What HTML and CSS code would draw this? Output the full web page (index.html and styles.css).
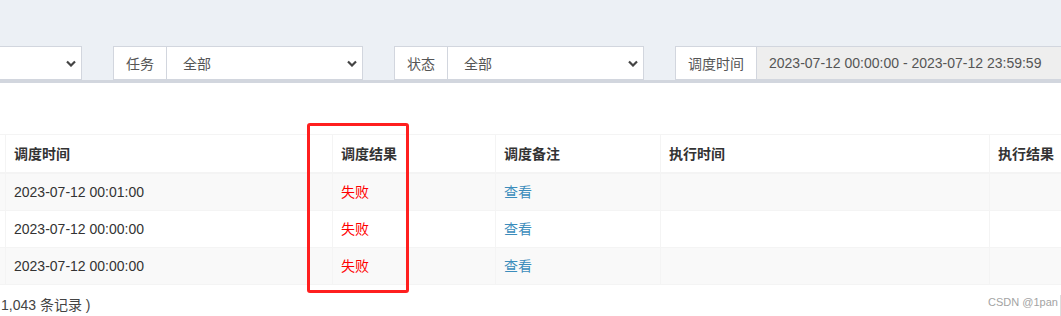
FILE: index.html
```html
<!DOCTYPE html>
<html lang="zh-CN">
<head>
    <meta charset="UTF-8">
    <title>调度日志</title>
    <link rel="stylesheet" href="styles.css">
</head>
<body>
<div class="page">

    <!-- Filter bar -->
    <div class="filters">
        <div class="input-group">
            <div class="select">
                <span></span>
                <svg class="chevron" width="10" height="7" viewBox="0 0 10 7"><polyline points="1,1.5 5,5.5 9,1.5" fill="none" stroke="#444" stroke-width="2.2"/></svg>
            </div>
        </div>
        <div class="input-group">
            <span class="addon">任务</span>
            <div class="select">
                <span>全部</span>
                <svg class="chevron" width="10" height="7" viewBox="0 0 10 7"><polyline points="1,1.5 5,5.5 9,1.5" fill="none" stroke="#444" stroke-width="2.2"/></svg>
            </div>
        </div>
        <div class="input-group">
            <span class="addon">状态</span>
            <div class="select">
                <span>全部</span>
                <svg class="chevron" width="10" height="7" viewBox="0 0 10 7"><polyline points="1,1.5 5,5.5 9,1.5" fill="none" stroke="#444" stroke-width="2.2"/></svg>
            </div>
        </div>
        <div class="input-group wide">
            <span class="addon">调度时间</span>
            <div class="date-input">2023-07-12 00:00:00 - 2023-07-12 23:59:59</div>
        </div>
    </div>

    <!-- Log table -->
    <div class="box">
        <table class="log-table">
            <thead>
                <tr>
                    <th class="col-cut"></th>
                    <th class="col-time">调度时间</th>
                    <th class="col-result">调度结果</th>
                    <th class="col-note">调度备注</th>
                    <th class="col-exec">执行时间</th>
                    <th class="col-exec-result">执行结果</th>
                </tr>
            </thead>
            <tbody>
                <tr>
                    <td></td>
                    <td>2023-07-12 00:01:00</td>
                    <td class="fail">失败</td>
                    <td><a href="#">查看</a></td>
                    <td></td>
                    <td></td>
                </tr>
                <tr>
                    <td></td>
                    <td>2023-07-12 00:00:00</td>
                    <td class="fail">失败</td>
                    <td><a href="#">查看</a></td>
                    <td></td>
                    <td></td>
                </tr>
                <tr>
                    <td></td>
                    <td>2023-07-12 00:00:00</td>
                    <td class="fail">失败</td>
                    <td><a href="#">查看</a></td>
                    <td></td>
                    <td></td>
                </tr>
            </tbody>
        </table>
        <div class="table-info">1,043 条记录 )</div>

        <!-- red annotation box -->
        <div class="highlight"></div>
        <div class="watermark">CSDN @1pan</div>
        <div class="edge-line"></div>
    </div>

</div>
</body>
</html>
```

FILE: styles.css
```css
/* Global */
body {
    margin: 0;
    background-color: #ecf0f5;
    font-family: 'Liberation Sans', 'Noto Sans CJK SC', sans-serif;
    font-size: 14px;
    color: #333;
}

.page {
    width: 1061px;
    height: 316px;
    overflow: hidden;
}

/* Filter bar */
.filters {
    display: flex;
    gap: 31px;
    padding-top: 46px;
    margin-left: -168px;
    white-space: nowrap;
}

.input-group {
    display: flex;
    flex-shrink: 0;
    width: 250px;
    height: 34px;
}

.input-group.wide {
    width: 420px;
}

.addon {
    display: flex;
    align-items: center;
    padding: 0 12px;
    background-color: #fff;
    border: 1px solid #d2d6de;
    color: #555;
}

.select {
    flex: 1;
    display: flex;
    align-items: center;
    justify-content: space-between;
    padding: 0 5px 0 16px;
    background-color: #fff;
    border: 1px solid #d2d6de;
    border-left: none;
    color: #555;
}

.input-group:first-child .select {
    border-left: 1px solid #d2d6de;
}

.chevron {
    display: block;
}

.date-input {
    flex: 1;
    display: flex;
    align-items: center;
    padding: 0 12px;
    background-color: #eee;
    border: 1px solid #d2d6de;
    border-left: none;
    color: #555;
}

/* Box with table */
.box {
    position: relative;
    background-color: #fff;
    border-top: 3px solid #d2d6de;
    height: 240px;
    padding-top: 51px;
    box-sizing: border-box;
}

.log-table {
    border-collapse: collapse;
    table-layout: fixed;
    width: 1200px;
    margin-left: -55px;
}

.log-table th,
.log-table td {
    padding: 8px;
    line-height: 20px;
    text-align: left;
    border: 1px solid #f4f4f4;
    white-space: nowrap;
}

.log-table th {
    font-weight: bold;
    padding-top: 9px;
    border-bottom-width: 2px;
}

.log-table tbody tr:nth-child(odd) {
    background-color: #f9f9f9;
}

.col-cut { width: 43px; }
.col-time { width: 310px; }
.col-result { width: 146px; }
.col-note { width: 148px; }
.col-exec { width: 312px; }
.col-exec-result { width: 180px; }

.fail {
    color: #ff0000;
}

.log-table a {
    color: #3c8dbc;
    text-decoration: none;
}

.table-info {
    margin-top: 10px;
    padding-left: 1px;
    line-height: 20px;
    color: #444;
}

/* Overlays */
.highlight {
    position: absolute;
    left: 307px;
    top: 40px;
    width: 96px;
    height: 164px;
    border: 3px solid #ff1f1f;
    border-radius: 3px;
}

.watermark {
    position: absolute;
    left: 988px;
    top: 213px;
    font-size: 11px;
    color: #a3a3a3;
}

.edge-line {
    position: absolute;
    left: 1060px;
    top: 212px;
    width: 1px;
    height: 30px;
    background-color: #ddd;
}
```
